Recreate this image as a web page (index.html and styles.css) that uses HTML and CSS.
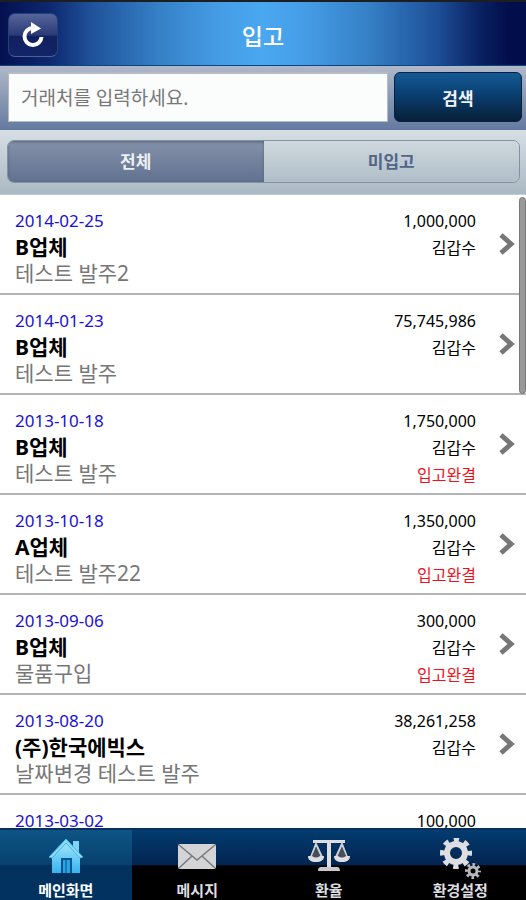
FILE: index.html
```html
<!DOCTYPE html>
<html lang="ko">
<head>
  <meta charset="UTF-8" />
  <meta name="viewport" content="width=device-width, initial-scale=1.0"/>
  <title>입고</title>
  <link rel="stylesheet" href="styles.css">
</head>
<body>
  <header class="header">
    <button class="refresh" type="button" aria-label="새로고침">
      <svg width="26" height="28" viewBox="0 0 26 28" fill="none">
        <path d="M13 7A8.500 8.500 0 1 0 21.500 16" stroke="#fff" stroke-width="4"/>
        <path d="M11 1v12l10-5.500z" fill="#fff"/>
      </svg>
    </button>
    <h1>입고</h1>
  </header>

  <form class="search">
    <input type="text" class="search-input" placeholder="거래처를 입력하세요." aria-label="거래처" />
    <button class="search-btn" type="button">검색</button>
  </form>

  <div class="filter">
    <div class="segment">
      <button type="button" class="segment-btn active">전체</button>
      <button type="button" class="segment-btn">미입고</button>
    </div>
  </div>

  <main class="list-wrap">
    <ul class="list">
      <li>
        <a class="row" href="#">
          <div class="info">
            <span class="date">2014-02-25</span>
            <strong class="company">B업체</strong>
            <span class="desc">테스트 발주2</span>
          </div>
          <div class="side">
            <span class="amount">1,000,000</span>
            <span>김갑수</span>
          </div>
          <svg class="arrow" viewBox="0 0 16 24"><path d="M2 3l10 9-10 9"/></svg>
        </a>
      </li>
      <li>
        <a class="row" href="#">
          <div class="info">
            <span class="date">2014-01-23</span>
            <strong class="company">B업체</strong>
            <span class="desc">테스트 발주</span>
          </div>
          <div class="side">
            <span class="amount">75,745,986</span>
            <span>김갑수</span>
          </div>
          <svg class="arrow" viewBox="0 0 16 24"><path d="M2 3l10 9-10 9"/></svg>
        </a>
      </li>
      <li>
        <a class="row" href="#">
          <div class="info">
            <span class="date">2013-10-18</span>
            <strong class="company">B업체</strong>
            <span class="desc">테스트 발주</span>
          </div>
          <div class="side">
            <span class="amount">1,750,000</span>
            <span>김갑수</span>
            <span class="done">입고완결</span>
          </div>
          <svg class="arrow" viewBox="0 0 16 24"><path d="M2 3l10 9-10 9"/></svg>
        </a>
      </li>
      <li>
        <a class="row" href="#">
          <div class="info">
            <span class="date">2013-10-18</span>
            <strong class="company">A업체</strong>
            <span class="desc">테스트 발주22</span>
          </div>
          <div class="side">
            <span class="amount">1,350,000</span>
            <span>김갑수</span>
            <span class="done">입고완결</span>
          </div>
          <svg class="arrow" viewBox="0 0 16 24"><path d="M2 3l10 9-10 9"/></svg>
        </a>
      </li>
      <li>
        <a class="row" href="#">
          <div class="info">
            <span class="date">2013-09-06</span>
            <strong class="company">B업체</strong>
            <span class="desc">물품구입</span>
          </div>
          <div class="side">
            <span class="amount">300,000</span>
            <span>김갑수</span>
            <span class="done">입고완결</span>
          </div>
          <svg class="arrow" viewBox="0 0 16 24"><path d="M2 3l10 9-10 9"/></svg>
        </a>
      </li>
      <li>
        <a class="row" href="#">
          <div class="info">
            <span class="date">2013-08-20</span>
            <strong class="company">(주)한국에빅스</strong>
            <span class="desc">날짜변경 테스트 발주</span>
          </div>
          <div class="side">
            <span class="amount">38,261,258</span>
            <span>김갑수</span>
          </div>
          <svg class="arrow" viewBox="0 0 16 24"><path d="M2 3l10 9-10 9"/></svg>
        </a>
      </li>
      <li>
        <a class="row" href="#">
          <div class="info">
            <span class="date">2013-03-02</span>
          </div>
          <div class="side">
            <span class="amount">100,000</span>
          </div>
          <svg class="arrow" viewBox="0 0 16 24"><path d="M2 3l10 9-10 9"/></svg>
        </a>
      </li>
    </ul>
    <div class="scroll-thumb"></div>
  </main>

  <nav class="tabbar">
    <a class="tab active" href="#">
      <svg width="36" height="36" viewBox="0 0 36 36">
        <defs>
          <linearGradient id="house" x1="0" y1="0" x2="0" y2="1">
            <stop offset="0" stop-color="#a5e6fb"/>
            <stop offset="1" stop-color="#35b4f0"/>
          </linearGradient>
        </defs>
        <path d="M25 3h6v12h-6z" fill="#7fd4f5"/>
        <path d="M4 18L18 4l14 14v17H4z" fill="url(#house)"/>
        <path d="M1 19L18 1l17 18-3 1L18 5 4 20z" fill="#8edcf8" stroke="#3fb2e4" stroke-width="1"/>
        <path d="M14 35V21h9v14" fill="#2aa3e3" stroke="#07558f" stroke-width="2"/>
        <path d="M18 22v13" stroke="#07558f" stroke-width="1"/>
      </svg>
      <span>메인화면</span>
    </a>
    <a class="tab" href="#">
      <svg width="40" height="36" viewBox="0 0 40 36">
        <rect x="1" y="6" width="38" height="25" rx="2" fill="#d4d4d6"/>
        <path d="M2 7l18 15L38 7M2 30l13-12M38 30L25 18" fill="none" stroke="#777a80" stroke-width="1.500"/>
      </svg>
      <span>메시지</span>
    </a>
    <a class="tab" href="#">
      <svg width="42" height="36" viewBox="0 0 42 36">
        <path d="M5 2h32v3H5z" fill="#dedee2"/>
        <path d="M19 3h4v27h-4z" fill="#dedee2"/>
        <path d="M13 29h16q3 0 3 4H10q0-4 3-4z" fill="#c9c9cd"/>
        <path d="M8 6L3 19h11zM34 6l-6 13h11z" fill="#444f5b" stroke="#cfd0d6" stroke-width="2"/>
        <path d="M0 18h16c0 4-3 6-8 6s-8-2-8-6zM26 18h16c0 4-3 6-8 6s-8-2-8-6z" fill="#dedee2"/>
        <path d="M8 9l-4 9q4 3 8 0zM34 9l-4 9q4 3 8 0z" fill="#444f5b"/>
      </svg>
      <span>환율</span>
    </a>
    <a class="tab" href="#">
      <svg width="42" height="42" viewBox="0 0 42 42" fill="none" stroke="#dedee2">
        <circle cx="17" cy="15" r="9" stroke-width="6"/>
        <circle cx="17" cy="15" r="13.500" stroke-width="5" stroke-dasharray="5.300 5.300" stroke-dashoffset="2.650"/>
        <g stroke="#b9b9bd">
          <circle cx="34" cy="33" r="4" stroke-width="3"/>
          <circle cx="34" cy="33" r="6.500" stroke-width="3" stroke-dasharray="2.550 2.550" stroke-dashoffset="1.270"/>
        </g>
      </svg>
      <span>환경설정</span>
    </a>
  </nav>
</body>
</html>
```
FILE: styles.css
```css
* {
  box-sizing: border-box;
}

body {
  font-family: "Noto Sans", "Noto Sans CJK KR", sans-serif;
  margin: 0;
  height: 100vh;
  display: flex;
  flex-direction: column;
  overflow: hidden;
  background: white;
  color: black;
}

button, input {
  font-family: inherit;
  margin: 0;
}

a {
  color: inherit;
  text-decoration: none;
}

.header {
  flex: none;
  display: grid;
  grid-template-columns: 1fr auto 1fr;
  align-items: center;
  height: 66px;
  padding: 2px 8px 0;
  border-top: 2px solid #1c1e22;
  border-bottom: 1px solid #06477e;
  background: linear-gradient(to right, #03104f 0%, #0e2a72 10%, #1e5098 17%, #3580c6 30%, #459de6 42%, #4aa8f0 50%, #459de6 58%, #3580c6 70%, #1e5098 83%, #0a2263 91%, #020d4b 97%);
}

.header h1 {
  margin: 0;
  padding-top: 2px;
  font-size: 23px;
  font-weight: 500;
  line-height: 32px;
  color: white;
}

.refresh {
  display: flex;
  align-items: center;
  justify-content: center;
  width: 50px;
  height: 44px;
  padding: 0;
  border: 1px solid #284078;
  border-bottom-color: #4a6296;
  border-radius: 7px;
  background: linear-gradient(#56659a, #2a3a76 50%, #101f60 54%, #132567);
  cursor: pointer;
}

.search {
  flex: none;
  display: flex;
  gap: 6px;
  height: 64px;
  padding: 6px 4px 8px 8px;
  background: linear-gradient(#b0b8c9, #637a9f);
}

.search-input {
  flex: 1;
  min-width: 0;
  padding: 0 12px;
  border: 1px solid #b5bbc6;
  border-width: 2px 1px 1px;
  background: #fbfcfc;
  font-size: 19px;
}

.search-input::placeholder {
  color: #777;
}

.search-btn {
  width: 128px;
  padding: 0;
  border: 1px solid #061f42;
  border-radius: 6px;
  background: linear-gradient(#145995, #0a3f70 45%, #071f37);
  color: #f1f3f6;
  font-size: 17px;
  font-weight: bold;
  cursor: pointer;
}

.filter {
  flex: none;
  height: 65px;
  padding: 10px 6px 12px 7px;
  border-bottom: 1px solid #c6ccd6;
  background: linear-gradient(#d5dee3, #abb9c4);
}

.segment {
  display: flex;
  height: 43px;
  overflow: hidden;
  border: 1px solid #8491a0;
  border-radius: 7px;
}

.segment-btn {
  flex: 1;
  padding: 0 0 3px;
  border: none;
  background: linear-gradient(#ced8dd, #b1bec8);
  color: #526488;
  font-size: 17px;
  font-weight: bold;
  cursor: pointer;
}

.segment-btn.active {
  background: linear-gradient(#8491a9, #61718f);
  box-shadow: inset 0 1px 3px #536079;
  color: #eceff3;
}

.list-wrap {
  flex: 1;
  min-height: 0;
  position: relative;
}

.list {
  height: 100%;
  margin: 0;
  padding: 0;
  list-style: none;
  overflow-y: auto;
  scrollbar-width: none;
}

.row {
  display: flex;
  min-height: 100px;
  padding: 0 11px 0 15px;
  border-bottom: 2px solid #b4b4b4;
}

.info, .side {
  display: flex;
  flex-direction: column;
  padding-top: 13px;
}

.info {
  flex: 1;
  font-size: 21px;
  line-height: 26px;
}

.date {
  font-size: 17px;
  color: #1a10d8;
}

.desc {
  color: #777;
}

.side {
  align-items: flex-end;
  margin-right: 23px;
  font-size: 16px;
  line-height: 27px;
}

.done {
  color: #f0101c;
}

.arrow {
  align-self: center;
  width: 16px;
  height: 24px;
  fill: none;
  stroke: #777;
  stroke-width: 5;
}

.scroll-thumb {
  position: absolute;
  top: 2px;
  right: 0;
  width: 7px;
  height: 197px;
  border: 1px solid #777;
  border-radius: 4px;
  background: #999;
}

.tabbar {
  flex: none;
  display: flex;
  height: 72px;
  border-top: 2px solid #07305f;
  background: linear-gradient(#033c70, #022450 50%, #000 51%);
}

.tab {
  flex: 1;
  display: flex;
  flex-direction: column;
  align-items: center;
  padding-top: 6px;
  color: #dedee2;
  font-size: 15px;
  font-weight: bold;
  line-height: 20px;
}

.tab svg {
  flex: none;
  margin-top: 2px;
}

.tab span {
  margin-top: auto;
}

.tab.active {
  background: linear-gradient(#0d5585, #07406f 50%, #02315d 51%, #023260);
  color: white;
}
```
